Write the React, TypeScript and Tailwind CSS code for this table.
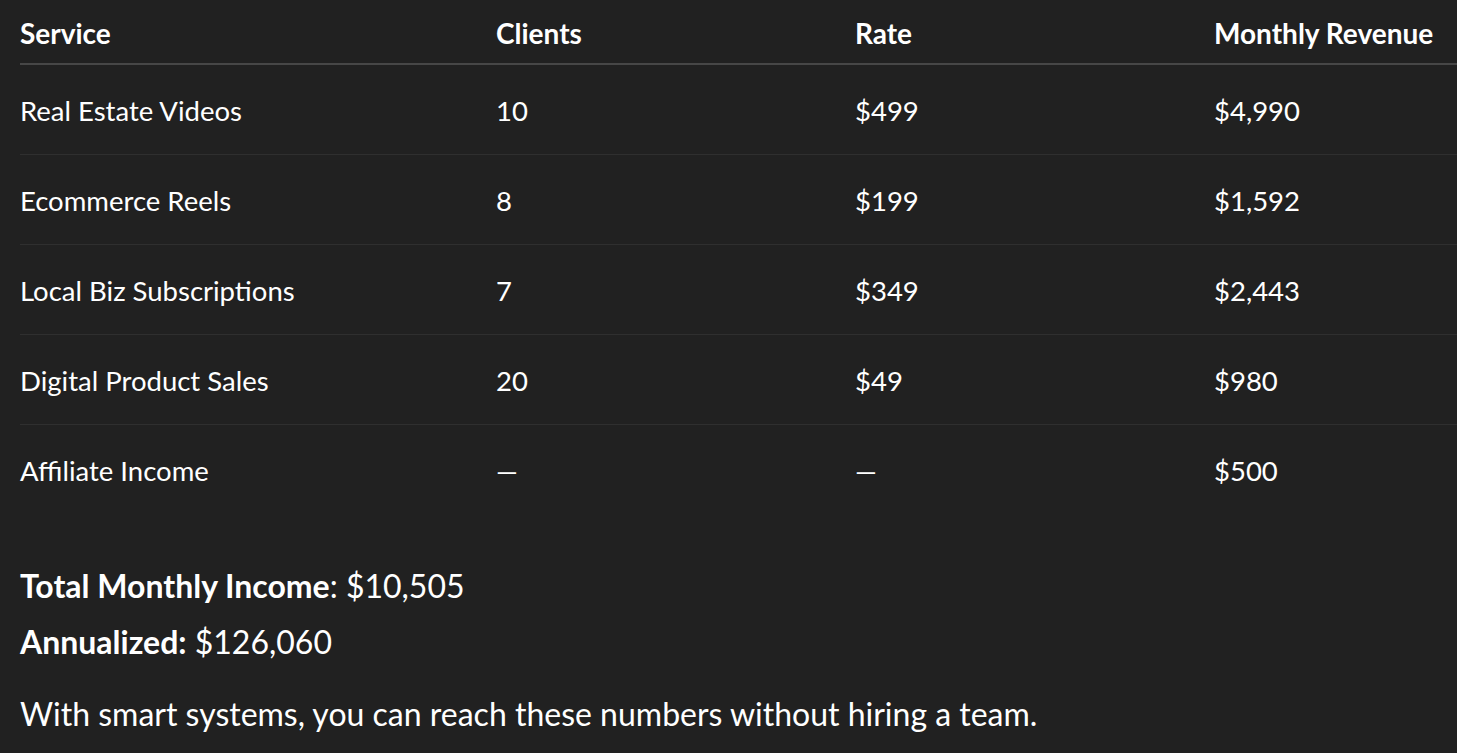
import React from "react";

const rows = [
  ["Real Estate Videos", "10", "$499", "$4,990"],
  ["Ecommerce Reels", "8", "$199", "$1,592"],
  ["Local Biz Subscriptions", "7", "$349", "$2,443"],
  ["Digital Product Sales", "20", "$49", "$980"],
  ["Affiliate Income", "—", "—", "$500"],
];

export default function App() {
  return (
    <div className="min-h-[753px] w-full bg-[#212121] text-white font-['Lato',sans-serif] pl-5 overflow-hidden">
      <div className="w-[1460px]">
        <div className="grid grid-cols-[476px_359px_359px_266px] h-[65px] items-center pt-[3px] border-b-2 border-[#474747] text-[28px] font-bold">
          <div>Service</div>
          <div>Clients</div>
          <div>Rate</div>
          <div className="whitespace-nowrap">Monthly Revenue</div>
        </div>
        {rows.map((r, i) => (
          <div
            key={i}
            className={`grid grid-cols-[476px_359px_359px_266px] h-[90px] items-center pt-[2px] text-[27.5px] ${i < rows.length - 1 ? "border-b border-[#2f2f2f]" : ""}`}
          >
            {r.map((c, j) => (
              <div key={j}>{c}</div>
            ))}
          </div>
        ))}
      </div>
      <div className="pt-[43px] text-[32px] leading-[56px]">
        <p>
          <span className="font-bold">Total Monthly Income</span>: $10,505
        </p>
        <p>
          <span className="font-bold">Annualized:</span> $126,060
        </p>
        <p className="mt-4">With smart systems, you can reach these numbers without hiring a team.</p>
      </div>
    </div>
  );
}
